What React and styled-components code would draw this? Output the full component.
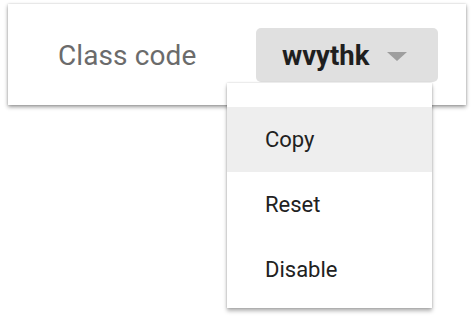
import React from 'react';
import styled, { createGlobalStyle, css } from 'styled-components';

const GlobalStyle = createGlobalStyle`
  html, body {
    margin: 0;
    padding: 0;
    background: #ffffff;
  }
  body {
    font-family: Roboto, 'Noto Sans', Arial, sans-serif;
  }
`;

const Page = styled.div`
  width: 474px;
  height: 319px;
  padding: 4px 8px 0 8px;
  box-sizing: border-box;
  overflow: hidden;
`;

const Card = styled.div`
  width: 458px;
  height: 101px;
  box-sizing: border-box;
  background: #ffffff;
  box-shadow: 0 2px 4px rgba(0, 0, 0, 0.4), 0 0 2px rgba(0, 0, 0, 0.15);
  display: flex;
  align-items: flex-start;
  padding: 24px 0 0 50px;
`;

const Label = styled.div`
  width: 198px;
  height: 54px;
  display: flex;
  align-items: center;
  font-size: 28px;
  color: #6b6b6b;
  letter-spacing: 0.1px;
`;

const Select = styled.div`
  position: relative;
`;

const Trigger = styled.button`
  width: 182px;
  height: 54px;
  border: none;
  border-radius: 5px;
  background: #e0e0e0;
  display: flex;
  align-items: center;
  padding: 0 0 0 26px;
  gap: 18px;
  font-family: inherit;
  font-size: 27.5px;
  font-weight: 700;
  color: #1f1f1f;
  cursor: pointer;
`;

const Arrow = styled.span`
  width: 0;
  height: 0;
  margin-top: 2px;
  border-left: 10px solid transparent;
  border-right: 10px solid transparent;
  border-top: 9px solid #9e9e9e;
`;

const Menu = styled.ul`
  position: absolute;
  left: -29px;
  top: 55px;
  width: 205px;
  margin: 0;
  padding: 24px 0 6px 0;
  list-style: none;
  background: #ffffff;
  box-shadow: 0 3px 4px rgba(0, 0, 0, 0.3), 0 0 2px rgba(0, 0, 0, 0.2);
`;

const Item = styled.li`
  height: 65px;
  display: flex;
  align-items: center;
  padding-left: 38px;
  font-size: 22px;
  color: #212121;
  ${({ active }) =>
    active &&
    css`
      background: #eeeeee;
    `}
`;

const items = ['Copy', 'Reset', 'Disable'];

export default function App() {
  return (
    <>
      <GlobalStyle />
      <Page>
        <Card>
          <Label>Class code</Label>
          <Select>
            <Trigger>
              wvythk
              <Arrow />
            </Trigger>
            <Menu>
              {items.map((item, index) => (
                <Item key={item} active={index === 0 ? 1 : 0}>
                  {item}
                </Item>
              ))}
            </Menu>
          </Select>
        </Card>
      </Page>
    </>
  );
}
